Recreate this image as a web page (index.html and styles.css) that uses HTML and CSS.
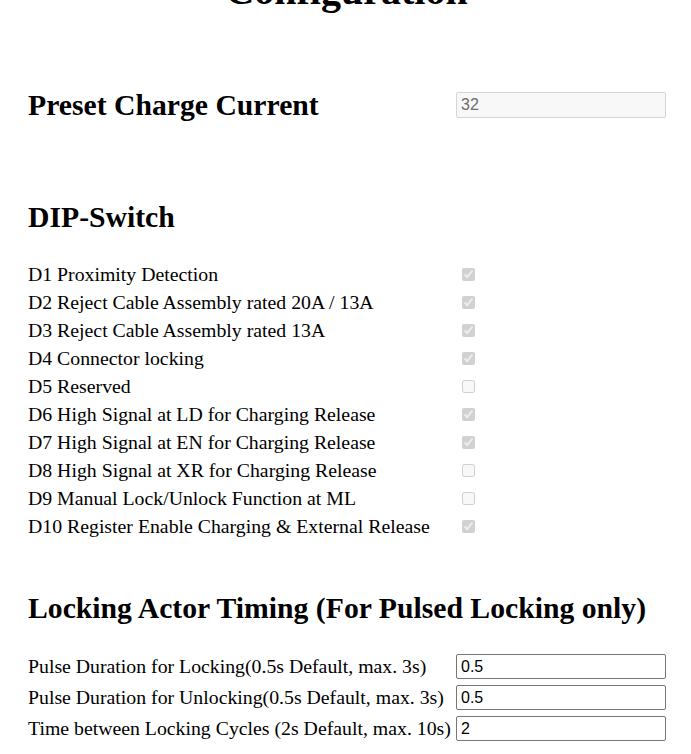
FILE: index.html
```html
<!DOCTYPE html>
<html lang="en">
<head>
  <meta charset="UTF-8">
  <title>Configuration</title>
  <link rel="stylesheet" href="styles.css">
</head>
<body>
  <div class="page">
    <h1 class="title">Configuration</h1>

    <div class="preset">
      <h2 class="section-title">Preset Charge Current</h2>
      <input type="text" class="field" value="32" disabled>
    </div>

    <h2 class="section-title dip-title">DIP-Switch</h2>
    <div class="switch-list">
      <label class="switch-row"><span>D1 Proximity Detection</span><input type="checkbox" checked disabled></label>
      <label class="switch-row"><span>D2 Reject Cable Assembly rated 20A / 13A</span><input type="checkbox" checked disabled></label>
      <label class="switch-row"><span>D3 Reject Cable Assembly rated 13A</span><input type="checkbox" checked disabled></label>
      <label class="switch-row"><span>D4 Connector locking</span><input type="checkbox" checked disabled></label>
      <label class="switch-row"><span>D5 Reserved</span><input type="checkbox" disabled></label>
      <label class="switch-row"><span>D6 High Signal at LD for Charging Release</span><input type="checkbox" checked disabled></label>
      <label class="switch-row"><span>D7 High Signal at EN for Charging Release</span><input type="checkbox" checked disabled></label>
      <label class="switch-row"><span>D8 High Signal at XR for Charging Release</span><input type="checkbox" disabled></label>
      <label class="switch-row"><span>D9 Manual Lock/Unlock Function at ML</span><input type="checkbox" disabled></label>
      <label class="switch-row"><span>D10 Register Enable Charging &amp; External Release</span><input type="checkbox" checked disabled></label>
    </div>

    <h2 class="section-title timing-title">Locking Actor Timing (For Pulsed Locking only)</h2>
    <div class="timing-list">
      <label class="timing-row"><span>Pulse Duration for Locking(0.5s Default, max. 3s)</span><input type="text" class="field" value="0.5"></label>
      <label class="timing-row"><span>Pulse Duration for Unlocking(0.5s Default, max. 3s)</span><input type="text" class="field" value="0.5"></label>
      <label class="timing-row"><span>Time between Locking Cycles (2s Default, max. 10s)</span><input type="text" class="field" value="2"></label>
    </div>
  </div>
</body>
</html>
```

FILE: styles.css
```css
body {
  margin: 0;
  background: #fff;
  color: #000;
  font-family: "Liberation Serif", "Times New Roman", serif;
}
.page {
  padding: 0 26px 40px 28px;
}
.title {
  margin: -33px 0 0;
  font-size: 40px;
  line-height: 48px;
  text-align: center;
}
.section-title {
  margin: 0;
  font-size: 29.7px;
  line-height: 34px;
  font-weight: bold;
}
/* Preset row: heading left, field in the control column */
.preset {
  display: grid;
  grid-template-columns: 428px 1fr;
  align-items: center;
  margin-top: 73px;
}
.dip-title {
  margin-top: 78px;
}
.switch-list {
  margin-top: 26px;
}
.switch-row,
.timing-row {
  display: grid;
  grid-template-columns: 428px 1fr;
  align-items: center;
  font-size: 19.8px;
}
.switch-row {
  height: 28px;
  line-height: 28px;
}
.switch-row input {
  width: 13px;
  height: 13px;
  margin: 0 0 0 6px;
}
.timing-title {
  margin-top: 51px;
}
.timing-list {
  margin-top: 26px;
}
.timing-row {
  height: 31px;
  white-space: nowrap;
}
.field {
  box-sizing: border-box;
  width: 210px;
  height: 26px;
  padding: 1px 4px;
  border: 1px solid #767676;
  border-radius: 2px;
  font-family: "Liberation Sans", Arial, sans-serif;
  font-size: 16px;
  color: #000;
  background: #fff;
}
.timing-row .field {
  height: 25px;
}
.field:disabled {
  border-color: #d5d5d5;
  background: #f8f8f8;
  color: #6d6d6d;
}
```
